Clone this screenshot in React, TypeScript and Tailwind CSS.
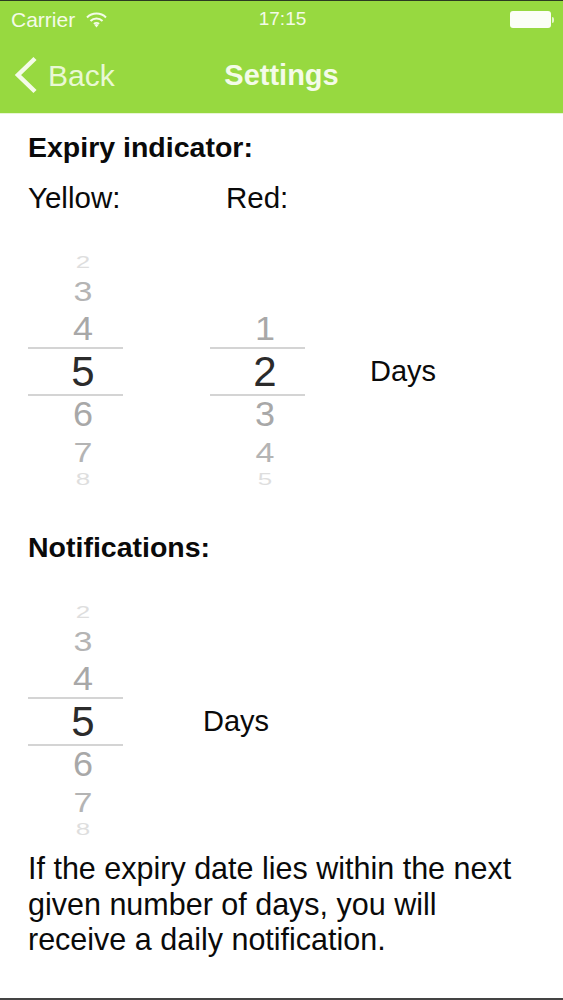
import React from 'react';

const rowStyles = [
  'h-[18px] text-[#dedede] text-[26px] scale-y-[0.6]',
  'h-[38px] text-[#b4b4b4] text-[34px] scale-y-[0.8]',
  'h-[37px] text-[#a8a8a8] text-[36px] scale-y-[0.92]',
  'h-[49px] text-[#2b2b2b] text-[42px] border-y-2 border-[#d4d4d4]',
  'h-[37px] text-[#a8a8a8] text-[36px] scale-y-[0.95]',
  'h-[37px] text-[#b4b4b4] text-[34px] scale-y-[0.8]',
  'h-[20px] text-[#dedede] text-[26px] scale-y-[0.6]',
];

const Picker = ({ values }: { values: (number | null)[] }) => (
  <div className="flex w-[95px] flex-col">
    {values.map((value, i) => (
      <div key={i} className={`flex items-center justify-center pl-[15px] leading-none ${rowStyles[i]}`}>
        {value}
      </div>
    ))}
  </div>
);

const StatusBar = () => (
  <div className="flex h-[37px] items-center justify-between pl-[11px] pr-[9px] text-[#f4fbe8]">
    <div className="flex w-[120px] items-center gap-[11px] text-[21px]">
      <span>Carrier</span>
      <svg width="21" height="16" viewBox="0 0 21 16" fill="none" stroke="currentColor" strokeWidth="2">
        <path d="M1 5.5a13.5 13.5 0 0 1 19 0" />
        <path d="M4.5 9a8.5 8.5 0 0 1 12 0" />
        <path d="M8 12a3.6 3.6 0 0 1 5 0" />
        <path d="M10.5 15.5l-2-2.5a3 3 0 0 1 4 0z" fill="currentColor" stroke="none" />
      </svg>
    </div>
    <span className="text-[19px] font-medium">17:15</span>
    <div className="flex w-[120px] items-center justify-end">
      <div className="h-[17px] w-[41px] rounded-[3px] bg-[#fbfef6]" />
      <div className="ml-[1px] h-[6px] w-[2px] rounded-r-sm bg-[#e4f5cc]" />
    </div>
  </div>
);

const NavBar = () => (
  <div className="relative flex h-[75px] items-center pb-[1px] pl-[14px] text-[#f4fbe8]">
    <svg width="24" height="38" viewBox="0 0 24 38" fill="none" stroke="currentColor" strokeWidth="4.5">
      <path d="M21 2.5L4 19l17 16.5" />
    </svg>
    <span className="ml-[10px] text-[30px] text-[#e9f8d4]">Back</span>
    <span className="absolute inset-x-0 bottom-[19px] text-center text-[29px] font-bold leading-[37px]">Settings</span>
  </div>
);

export default function App() {
  return (
    <div className="flex h-[1000px] w-[563px] flex-col overflow-hidden border-b-2 border-[#444] bg-white font-['Liberation_Sans',Arial,sans-serif] text-[#0a0a0a]">
      <header className="border-t border-[#2c3a22] bg-[#97d940] shadow-[0_1px_0_#e8f6d4]">
        <StatusBar />
        <NavBar />
      </header>

      <main className="flex flex-col pl-[28px] pr-[20px]">
        <h2 className="mt-[17px] text-[28.5px] font-bold leading-[34px]">Expiry indicator:</h2>
        <div className="mt-[17px] flex text-[29.5px] leading-[34px]">
          <span className="w-[198px]">Yellow:</span>
          <span>Red:</span>
        </div>

        <div className="mt-[39px] flex items-center">
          <Picker values={[2, 3, 4, 5, 6, 7, 8]} />
          <div className="ml-[87px]">
            <Picker values={[null, null, 1, 2, 3, 4, 5]} />
          </div>
          <span className="ml-[65px] text-[29px]">Days</span>
        </div>

        <h2 className="mt-[40px] text-[28.5px] font-bold leading-[34px]">Notifications:</h2>

        <div className="mt-[40px] flex items-center">
          <Picker values={[2, 3, 4, 5, 6, 7, 8]} />
          <span className="ml-[80px] text-[29px]">Days</span>
        </div>

        <p className="mt-[11px] text-[30.5px] leading-[35.5px]">
          If the expiry date lies within the next
          <br />
          given number of days, you will
          <br />
          receive a daily notification.
        </p>
      </main>
    </div>
  );
}
